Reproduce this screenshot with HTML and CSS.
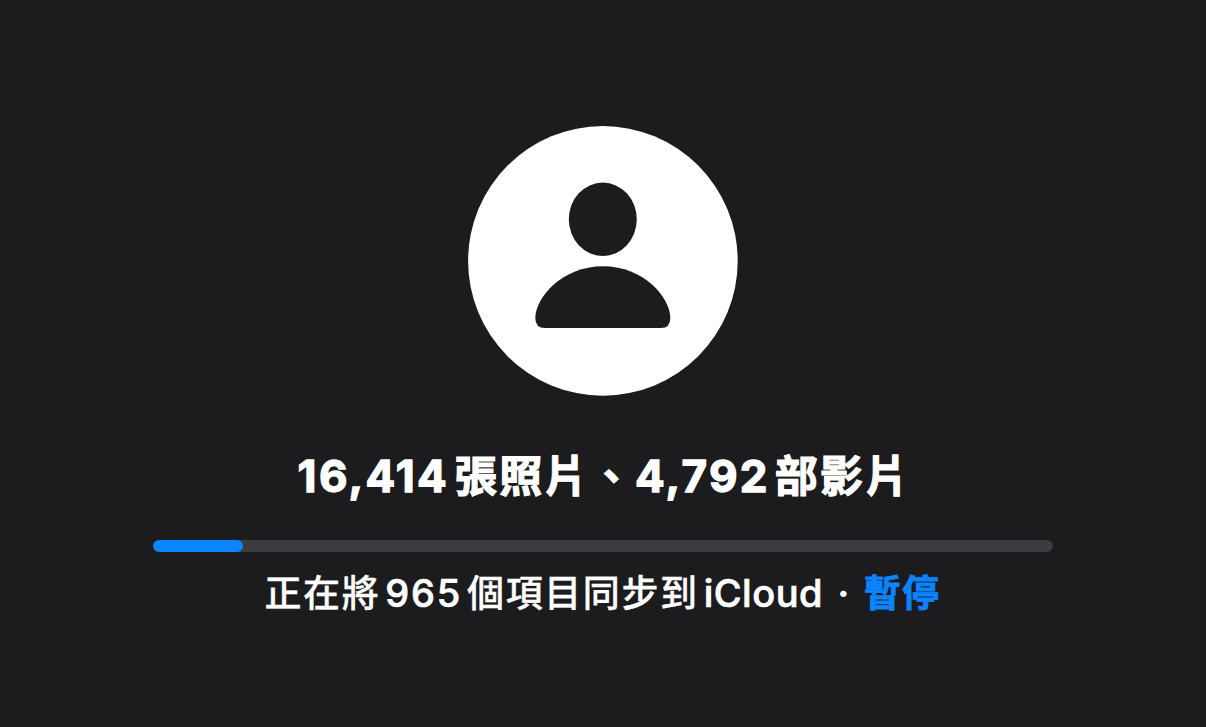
FILE: index.html
```html
<!DOCTYPE html>
<html lang="zh-Hant">
<head>
    <meta charset="UTF-8">
    <title>iCloud</title>
    <link rel="stylesheet" href="styles.css">
</head>
<body>
    <div class="status">
        <svg class="avatar" viewBox="0 0 270 270">
            <circle class="avatar-bg" cx="134.9" cy="134.9" r="134.8"/>
            <ellipse class="avatar-person" cx="134.8" cy="93.3" rx="34" ry="36.7"/>
            <path class="avatar-person" d="M135 140.3 C94 140.3 67.3 172 67.3 192 Q67.3 202 77 202 H193 Q202.3 202 202.3 192 C202.3 172 176 140.3 135 140.3 Z"/>
        </svg>
        <h1 class="count"><span class="num">16,414</span><span class="han">張照片、</span><span class="num">4,792</span><span class="han">部影片</span></h1>
        <div class="bar"><div class="bar-fill" style="width:10%"></div></div>
        <p class="sync"><span class="han">正在將</span><span class="num">965</span><span class="han">個項目同步到</span><span class="name">iCloud</span><span class="dot">·</span><a class="pause">暫停</a></p>
    </div>
</body>
</html>
```

FILE: styles.css
```css
body {
    margin: 0;
    background: #1c1c1e;
    color: #fff;
    font-family: Inter, "Noto Sans CJK TC", sans-serif;
}
.status {
    display: flex;
    flex-direction: column;
    align-items: center;
    padding-top: 126px;
}
.avatar { width: 270px; height: 270px; }
.avatar-bg { fill: #fff; }
.avatar-person { fill: #1c1c1e; }
.count {
    display: flex;
    align-items: baseline;
    margin: 50px 0 0;
    padding-left: 2px;
    font-size: 44px;
    line-height: 60px;
    font-weight: 700;
    white-space: nowrap;
}
.count .num { margin-right: 5px; letter-spacing: 2.3px; -webkit-text-stroke: 1.3px #fff; }
.count .han { font-size: 43px; letter-spacing: 2.2px; -webkit-text-stroke: 1.1px #fff; }
.bar {
    width: 900px;
    height: 12px;
    margin-top: 34px;
    border-radius: 6px;
    background: #3d3c41;
    overflow: hidden;
}
.bar-fill { height: 12px; border-radius: 6px; background: #0a84ff; }
.sync {
    display: flex;
    align-items: baseline;
    margin: 16px 0 0;
    padding-right: 1px;
    font-size: 38px;
    line-height: 50px;
    font-weight: 500;
    white-space: nowrap;
}
.sync .han { font-size: 37px; letter-spacing: 1.6px; -webkit-text-stroke: 0.3px #fff; }
.sync .num { margin: 0 5px; letter-spacing: 1.8px; -webkit-text-stroke: 0.7px #fff; }
.name { margin-left: 5px; letter-spacing: 0.5px; -webkit-text-stroke: 0.7px #fff; }
.dot { margin: 0 14px 0 14px; font-weight: 700; }
.pause { color: #0a84ff; font-size: 37px; font-weight: 700; letter-spacing: 1.4px; -webkit-text-stroke: 0.8px #0a84ff; }
```
